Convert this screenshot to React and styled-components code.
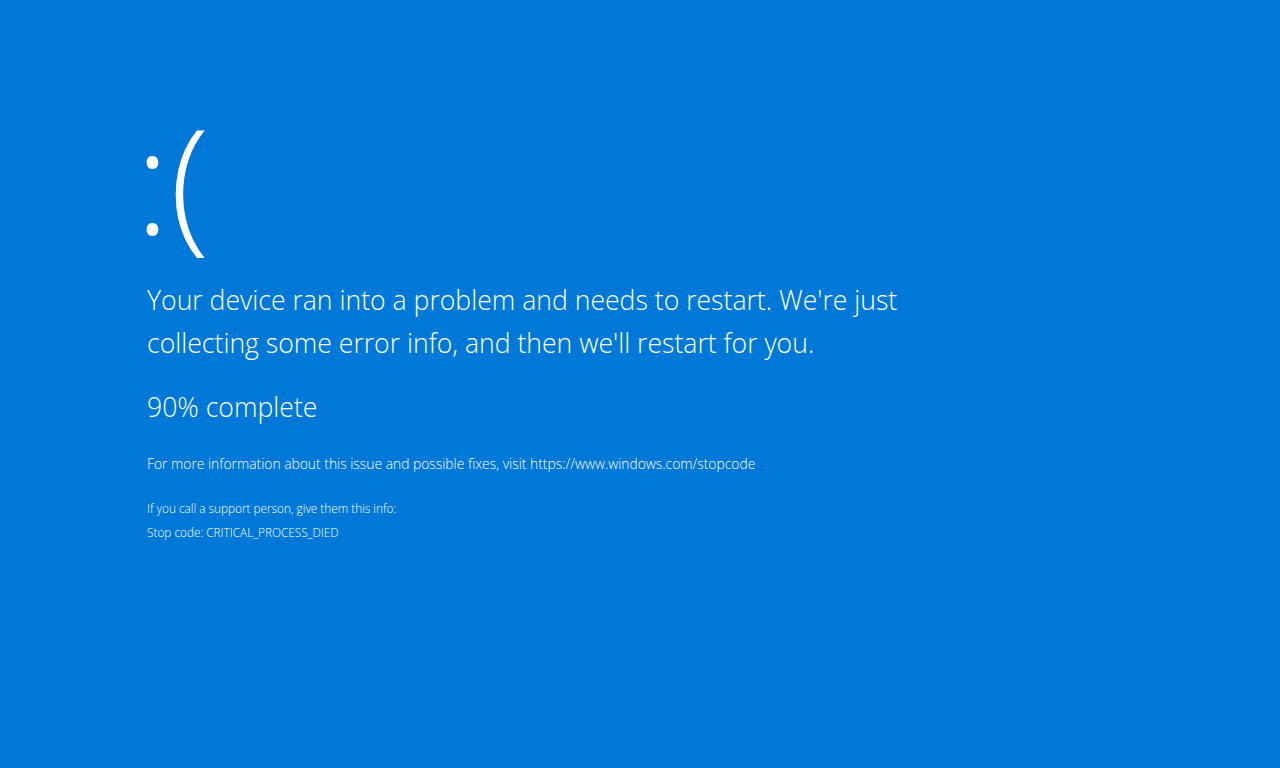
import React from 'react'
import styled, { createGlobalStyle } from 'styled-components'

const GlobalStyle = createGlobalStyle`
  html, body {
    margin: 0;
    padding: 0;
    background: #0078d7;
  }
`

const Screen = styled.div`
  width: 1280px;
  height: 768px;
  background: #0078d7;
  color: #fff;
  font-family: "Open Sans", "Noto Sans", sans-serif;
  font-weight: 300;
  box-sizing: border-box;
  padding: 94px 0 0 140px;
  display: flex;
  flex-direction: column;
  overflow: hidden;
`

const Face = styled.div`
  font-size: 146px;
  line-height: 170px;
  font-weight: 300;
  margin: 0 0 15px -5px;
`

const Message = styled.div`
  font-size: 26.6px;
  line-height: 43px;
  padding-left: 7px;
`

const Progress = styled.div`
  font-size: 26.6px;
  line-height: 43px;
  margin-top: 21px;
  padding-left: 7px;
`

const Info = styled.div`
  font-size: 13.85px;
  line-height: 20px;
  margin-top: 25px;
  padding-left: 7px;
`

const Support = styled.div`
  display: flex;
  flex-direction: column;
  gap: 8px;
  margin-top: 26px;
  padding-left: 7px;
  font-size: 11.8px;
  line-height: 16px;
`

const App = () => {
  return (
    <Screen>
      <GlobalStyle />
      <Face>:(</Face>
      <Message>
        Your device ran into a problem and needs to restart. We're just<br />
        collecting some error info, and then we'll restart for you.
      </Message>
      <Progress>90% complete</Progress>
      <Info>For more information about this issue and possible fixes, visit https://www.windows.com/stopcode</Info>
      <Support>
        <span>If you call a support person, give them this info:</span>
        <span>Stop code: CRITICAL_PROCESS_DIED</span>
      </Support>
    </Screen>
  )
}

export default App
